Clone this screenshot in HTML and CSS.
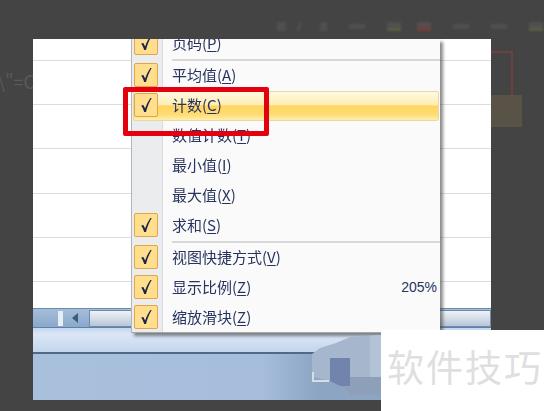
FILE: index.html
```html
<!DOCTYPE html>
<html lang="zh-CN">
  <head>
    <meta charset="UTF-8" />
    <title>状态栏菜单</title>
    <link rel="stylesheet" href="styles.css">
  </head>
  <body>
    <svg class="defs" width="0" height="0">
      <symbol id="tick" viewBox="0 0 16 18">
        <path d="M2.5 9.5 L5 9 L7 13 C8.5 8.5 10.5 4.5 13 1 L14.5 1 C11.5 6 9.5 11 8 17 L6 17 C5 14 4 11.5 2.5 9.5 Z" />
      </symbol>
    </svg>

    <div class="toolbar">
      <i class="tool tool-b"></i><i class="tool tool-i"></i><i class="tool tool-u"></i>
      <i class="tool tool-line"></i><i class="tool tool-yellow"></i><i class="tool tool-red"></i>
      <i class="tool tool-line"></i><i class="tool tool-line"></i><i class="tool tool-yellow"></i>
    </div>
    <div class="ghost-text"><span>\"=C</span></div>
    <div class="ghost-red"></div>
    <div class="ghost-orange"></div>

    <div class="sheet">
      <div class="rows">
        <div class="row row-first"></div>
        <div class="row"></div>
        <div class="row"></div>
        <div class="row"></div>
        <div class="row"></div>
        <div class="row"></div>
        <div class="row row-last"></div>
      </div>
      <div class="tabbar">
        <span class="tab-split"></span>
        <span class="tab-arrow"></span>
        <span class="tab-thumb"></span>
      </div>
      <div class="ribbon-foot"></div>
      <div class="statusbar"></div>
    </div>

    <div class="menu">
      <div class="item item-cut"><span class="check"><svg><use href="#tick" /></svg></span><span class="label">页码(<u>P</u>)</span></div>
      <div class="sep"></div>
      <div class="item"><span class="check"><svg><use href="#tick" /></svg></span><span class="label">平均值(<u>A</u>)</span></div>
      <div class="item active"><span class="check"><svg><use href="#tick" /></svg></span><span class="label">计数(<u>C</u>)</span></div>
      <div class="item"><span class="nocheck"></span><span class="label">数值计数(<u>T</u>)</span></div>
      <div class="item"><span class="nocheck"></span><span class="label">最小值(<u>I</u>)</span></div>
      <div class="item"><span class="nocheck"></span><span class="label">最大值(<u>X</u>)</span></div>
      <div class="item"><span class="check"><svg><use href="#tick" /></svg></span><span class="label">求和(<u>S</u>)</span></div>
      <div class="sep"></div>
      <div class="item"><span class="check"><svg><use href="#tick" /></svg></span><span class="label">视图快捷方式(<u>V</u>)</span></div>
      <div class="item"><span class="check"><svg><use href="#tick" /></svg></span><span class="label">显示比例(<u>Z</u>)</span><span class="value">205%</span></div>
      <div class="item"><span class="check"><svg><use href="#tick" /></svg></span><span class="label">缩放滑块(<u>Z</u>)</span></div>
    </div>

    <div class="red-frame"></div>

    <div class="blob">
      <i class="blob-band"></i><i class="blob-dark"></i><i class="blob-col"></i>
    </div>
    <div class="grip"></div>
    <div class="watermark">软件技巧</div>
  </body>
</html>
```

FILE: styles.css
```css
* {
  box-sizing: border-box;
}

html,
body {
  margin: 0;
  height: 411px;
  overflow: hidden;
}

body {
  position: relative;
  width: 544px;
  padding: 39px 53px 11px 33px;
  background: #444444;
  font-family: "Noto Sans CJK SC", "Liberation Sans", sans-serif;
}

.defs {
  position: absolute;
}

/* faded parts of the window behind the dialog */
.toolbar {
  position: absolute;
  left: 277px;
  top: 22px;
  display: flex;
  align-items: center;
  filter: blur(1px);
}

.tool {
  display: block;
  width: 9px;
  height: 9px;
  background: #505050;
}

.tool-i {
  width: 3px;
  margin-left: 12px;
  transform: skewX(-20deg);
}

.tool-u {
  width: 7px;
  margin-left: 19px;
}

.tool-line {
  width: 16px;
  height: 5px;
  margin-left: 22px;
}

.tool-yellow {
  width: 14px;
  margin-left: 22px;
  background: linear-gradient(#505050 65%, #5e5d42 65%);
}

.tool-red {
  width: 14px;
  margin-left: 16px;
  background: linear-gradient(#505050 60%, #703f3f 60%);
}

.ghost-text {
  position: absolute;
  left: 0;
  top: 68px;
  width: 33px;
  overflow: hidden;
  font-size: 18px;
  line-height: 26px;
  white-space: nowrap;
  color: #5a5a5a;
}

.ghost-text span {
  margin-left: -2px;
}

.ghost-red {
  position: absolute;
  left: 491px;
  top: 51px;
  width: 22px;
  height: 52px;
  border: 2px solid #6f4040;
  border-left: 0;
}

.ghost-orange {
  position: absolute;
  left: 491px;
  top: 95px;
  width: 31px;
  height: 32px;
  background: #585247;
}

.sheet {
  display: flex;
  flex-direction: column;
  width: 458px;
  height: 361px;
  background: #fff;
}

.rows {
  flex: 0 0 269px;
}

.row {
  height: 44.2px;
  border-bottom: 1px solid #dcdcdc;
}

.row-first {
  height: 22px;
}

.row-last {
  border-bottom: 0;
  height: 26px;
}

.tabbar {
  display: flex;
  align-items: center;
  height: 20px;
  border-top: 1px solid #6d8cb0;
  border-bottom: 1px solid #5f80a8;
  background: linear-gradient(#a5bdd9, #8aa8cc);
}

.tab-split {
  width: 5px;
  height: 15px;
  margin-left: 25px;
  background: #e8eef5;
}

.tab-arrow {
  width: 0;
  height: 0;
  margin-left: 9px;
  border: 5px solid transparent;
  border-right: 6px solid #3f5a7c;
  border-left: 0;
}

.tab-thumb {
  flex: 1;
  height: 17px;
  margin-left: 11px;
  border: 1px solid #6f8cac;
  background: linear-gradient(#f0f3f7, #b7c6d8);
}

.ribbon-foot {
  height: 26px;
  border-bottom: 2px solid #4f6a89;
  background: linear-gradient(#c3d6ee, #dbe7f6 25%, #c4d6ec);
}

.statusbar {
  flex: 1;
  background: linear-gradient(90deg, #a8c0dc 0, #a6bedb 50%, #8ba5c2 62%, #8ba5c2 100%);
}

/* context menu */
.menu {
  position: absolute;
  left: 131px;
  top: 39px;
  width: 309px;
  height: 294px;
  overflow: hidden;
  background: linear-gradient(90deg, #ebeced 0, #ebeced 30px, #d9dadb 30px, #d9dadb 31px, #fafafa 31px);
  border-left: 1px solid #b5b5b5;
  border-bottom: 1px solid #a8a8a8;
  box-shadow: 3px 3px 3px rgba(60, 60, 60, 0.6);
  color: #27345f;
}

.item {
  display: flex;
  align-items: center;
  height: 30px;
  padding-left: 2px;
  font-size: 15px;
}

.item-cut {
  margin-top: -10px;
}

.active {
  margin: 0 1px;
  padding-left: 0;
  border: 1px solid #e6d9a8;
  border-radius: 2px;
  background: linear-gradient(#fff9e0, #ffedb4 45%, #ffd560 50%, #ffdc74 80%, #ffeeac);
}

.check {
  display: flex;
  align-items: center;
  justify-content: center;
  width: 24px;
  height: 24px;
  margin-top: -2px;
  border: 1px solid #e3a44c;
  border-radius: 2px;
  background: #ffdf8e;
}

.check svg {
  width: 14px;
  height: 16px;
  fill: #1c2547;
}

.nocheck {
  width: 24px;
}

.label {
  margin-left: 14px;
  margin-top: -3px;
  filter: blur(0.3px);
}

.label u {
  text-underline-offset: 2px;
}

.value {
  margin-left: auto;
  margin-top: -3px;
  padding-right: 3px;
  font-size: 14px;
  font-family: "Liberation Sans", sans-serif;
}

.sep {
  height: 2px;
  margin-left: 40px;
  background: #d8d8d8;
}

.red-frame {
  position: absolute;
  left: 123px;
  top: 87px;
  width: 146px;
  height: 49px;
  border: 5px solid #e3000f;
  border-radius: 2px;
}

/* smudge that hides the zoom control */
.blob {
  position: absolute;
  left: 312px;
  top: 335px;
  width: 69px;
  height: 60px;
  background: #a6b6cc;
  clip-path: polygon(0 19px, 8px 13px, 24px 8px, 38px 2px, 69px 0, 69px 60px, 38px 60px, 30px 52px, 18px 46px, 0 42px);
}

.blob i {
  position: absolute;
  display: block;
}

.blob-band {
  left: 18px;
  top: 42px;
  width: 51px;
  height: 18px;
  background: #8e9fba;
}

.blob-dark {
  left: 18px;
  top: 23px;
  width: 20px;
  height: 28px;
  background: #7084ae;
}

.blob-col {
  left: 58px;
  top: 0;
  width: 11px;
  height: 42px;
  background: #b3c3d7;
}

.grip {
  position: absolute;
  left: 312px;
  top: 372px;
  width: 17px;
  height: 10px;
  border-left: 2px solid #d8dde4;
  border-bottom: 2px solid #d8dde4;
}

.watermark {
  position: absolute;
  left: 381px;
  top: 330px;
  width: 163px;
  height: 81px;
  padding: 11px 0 0 6px;
  background: #fff;
  color: #dfdfdf;
  font-size: 37px;
  line-height: 50px;
  letter-spacing: 2px;
  white-space: nowrap;
}
```
